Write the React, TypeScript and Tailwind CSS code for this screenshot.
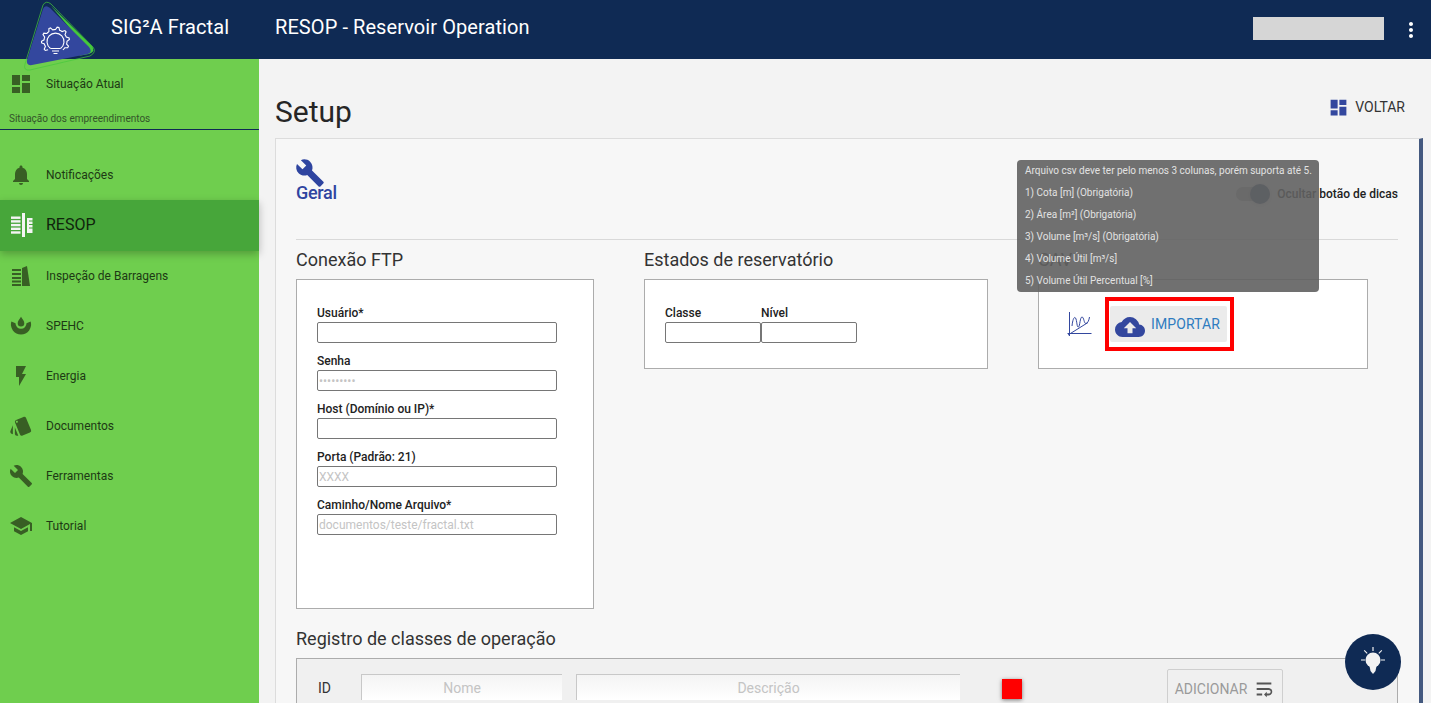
import { MdBuild, MdCloudUpload, MdDashboard, MdFlashOn, MdMoreVert, MdNotifications, MdSchool, MdStyle, MdWrapText } from "react-icons/md";
import type { ReactNode } from "react";

function ResopIcon({ className }: { className?: string }) {
    return (
        <svg viewBox="0 0 22 24" className={className} fill="currentColor">
            <rect x="11" y="0" width="3" height="24" />
            <rect x="0" y="3.500" width="9.500" height="2.400" />
            <rect x="0" y="7.200" width="9.500" height="2.400" />
            <rect x="0" y="10.900" width="9.500" height="2.400" />
            <rect x="0" y="14.600" width="9.500" height="2.400" />
            <rect x="0" y="18.300" width="9.500" height="2.400" />
            <path d="M16 5h5.500v2.500H18v1h3.500v2.500H18v1h3.500v2.500H18v1h3.500V20H16z" />
        </svg>
    );
}

function DamIcon({ className }: { className?: string }) {
    return (
        <svg viewBox="0 0 18 20" className={className} fill="currentColor">
            <path d="M10 2 L15 0 L18 20 H10z" />
            <rect x="0" y="3" width="9" height="2" />
            <rect x="0" y="7" width="9" height="2" />
            <rect x="0" y="11" width="9" height="2" />
            <rect x="0" y="14.500" width="9" height="2" />
            <rect x="0" y="18" width="9" height="2" />
        </svg>
    );
}

function DropIcon({ className }: { className?: string }) {
    return (
        <svg viewBox="0 0 24 24" className={className} fill="currentColor">
            <path d="M12 2c2 3 3.600 4.800 3.600 7a3.600 3.600 0 0 1-7.200 0C8.400 6.800 10 5 12 2z" />
            <path d="M1.500 7 L6 9 A6 6 0 0 0 18 9 L22.500 7 A11 11 0 1 1 1.500 7z" />
        </svg>
    );
}

function ChartIcon({ className }: { className?: string }) {
    return (
        <svg viewBox="0 0 26 26" className={className} fill="none" stroke="currentColor" strokeWidth="1">
            <path d="M3.500 1v24M1.500 22.500h24M2 24 L22 11.500" />
            <path d="M6 15 C7 6 9 5 10 8 S11 17 12.500 16 S14 6 16 6 S18 13 20 12.500 S23 9 23.500 6" />
        </svg>
    );
}

// gear teeth around the bulb, left open at the bottom
const GEAR_POINTS = Array.from({ length: 41 }, (_, i) => {
    const angle = ((130 + (i * 280) / 40) * Math.PI) / 180;
    const r = i % 5 === 1 || i % 5 === 2 ? 14 : 11.500;
    return `${(55.500 + r * Math.cos(angle)).toFixed(1)},${(41 + r * Math.sin(angle)).toFixed(1)}`;
}).join(" ");

function LogoMark() {
    return (
        <svg viewBox="0 0 100 76" className="absolute left-0 top-0 z-20 h-[76px] w-[100px]">
            <path d="M43 5 Q46 0 51 4 L93 47 Q97 52 90 56 L30 70 Q23 71 25 64z" fill="none" stroke="#45c93b" strokeWidth="0.7" />
            <path d="M51 6 L92 46 Q96 51 89 54 L78 56 Q90 52 85 46z" fill="#45c93b" />
            <path d="M43 9 Q45 4 50 8 L89 47 Q93 52 88 54 L32 65 Q26 66 27 60z" fill="#33479e" />
            <g fill="none" stroke="#fff" strokeWidth="1.100">
                <polyline points={GEAR_POINTS} />
                <path d="M50.500 48.500 A8.500 8.500 0 1 1 60.500 48.500" />
                <path d="M50.500 48.500h10M52 51h7M53.500 53.500h4" />
            </g>
        </svg>
    );
}

function SideItem({ icon, label, active }: { icon: ReactNode; label: string; active?: boolean }) {
    return (
        <div className={active
            ? "relative z-10 flex h-[51px] items-center bg-[#47a63a] pb-[1px] shadow-[0_3px_8px_rgba(0,0,0,0.25)]"
            : "flex h-[50px] items-center"}>
            <span className={active
                ? "flex w-[46px] shrink-0 justify-center pr-[3px] text-[#f4f4f4]"
                : "flex w-[46px] shrink-0 justify-center pr-[4px] text-[#385f24]"}>{icon}</span>
            <span className={active
                ? "text-base text-[#10240c]"
                : "text-xs text-[#1d3a14]"}>{label}</span>
        </div>
    );
}

function Sidebar() {
    return (
        <aside className="w-[259px] shrink-0 bg-[#6fce4e]">
            <SideItem icon={<MdDashboard size={24} />} label="Situação Atual" />
            <div className="box-content flex h-[19px] items-center border-b border-[#0f2a54] pb-[1px] pl-[9px] text-[10px] text-[#33552a]">Situação dos empreendimentos</div>
            <div className="h-[20px]" />
            <SideItem icon={<MdNotifications size={24} />} label="Notificações" />
            <SideItem active icon={<ResopIcon className="h-[24px] w-[22px]" />} label="RESOP" />
            <SideItem icon={<DamIcon className="h-[20px] w-[18px]" />} label="Inspeção de Barragens" />
            <SideItem icon={<DropIcon className="h-[22px] w-[22px]" />} label="SPEHC" />
            <SideItem icon={<MdFlashOn size={24} />} label="Energia" />
            <SideItem icon={<MdStyle size={24} />} label="Documentos" />
            <SideItem icon={<MdBuild size={24} />} label="Ferramentas" />
            <SideItem icon={<MdSchool size={24} />} label="Tutorial" />
        </aside>
    );
}

function Field({ label, placeholder }: { label: string; placeholder?: string }) {
    return (
        <div className="mb-[5px] w-[240px]">
            <div className="h-[17px] text-xs font-medium leading-[17px] text-[#222]">{label}</div>
            <input
                readOnly
                placeholder={placeholder}
                className="block h-[21px] w-full rounded-[2px] border border-[#767676] bg-white px-[1px] text-xs placeholder:text-[#c4c4c4]"
            />
            <div className="h-[5px]" />
        </div>
    );
}

function Tooltip() {
    const lines = [
        "1) Cota [m] (Obrigatória)",
        "2) Área [m²] (Obrigatória)",
        "3) Volume [m³/s] (Obrigatória)",
        "4) Volume Útil [m³/s]",
        "5) Volume Útil Percentual [%]",
    ];
    return (
        <div className="absolute left-[741px] top-[21px] z-10 h-[132px] w-[302px] whitespace-nowrap rounded-[4px] bg-[#616161]/90 px-[8px] text-[10px] leading-[22px] text-[#e2e2e2]">
            <div>Arquivo csv deve ter pelo menos 3 colunas, porém suporta até 5.</div>
            {lines.map((line) => <div key={line}>{line}</div>)}
        </div>
    );
}

export default function App() {
    return (
        <div className="relative flex h-[703px] flex-col overflow-hidden bg-[#f3f3f3] font-['Roboto',sans-serif]">
            <LogoMark />
            <header className="flex h-[59px] shrink-0 items-center bg-[#0f2a54] text-white">
                <div className="w-[275px] shrink-0 pb-[6px] pl-[111px] text-xl tracking-[0.08px]">SIG²A Fractal</div>
                <div className="pb-[6px] text-xl tracking-[0.08px]">RESOP - Reservoir Operation</div>
                <div className="mb-[2px] ml-auto mr-[7px] h-[23px] w-[131px] bg-[#d6d6d6]" />
                <MdMoreVert size={24} className="mx-[8px]" />
            </header>

            <div className="flex min-h-0 flex-1">
                <Sidebar />
                <main className="relative min-w-0 flex-1 pl-[16px]">
                    <div className="flex h-[79px] items-end pb-[8px]">
                        <h1 className="text-[30px] leading-[36px] text-[#262626]">Setup</h1>
                        <div className="mb-[13px] ml-auto mr-[26px] flex h-[20px] items-center gap-[6px] text-sm text-[#333]">
                            <MdDashboard size={21} className="text-[#33479e]" />
                            VOLTAR
                        </div>
                    </div>

                    <section className="relative flex h-[600px] w-[1148px] flex-col border-y border-l border-r-[4px] border-[#dcdcdc] border-r-[#44597f] bg-[#f7f7f7] pl-[20px] pr-[21px]">
                        <Tooltip />
                        <div className="flex h-[101px] shrink-0 border-b border-[#d9d9d9]">
                            <div className="pt-[19px] text-[#2f45a0]">
                                <MdBuild size={30} className="-ml-[1px]" />
                                <div className="-mt-[5px] text-lg font-medium leading-[20px] tracking-[-0.3px]">Geral</div>
                            </div>
                            <div className="ml-auto flex h-[110px] items-center gap-[7px] self-start text-xs font-medium text-[#222]">
                                <div className="relative h-[14px] w-[34px] rounded-full bg-[#bdbdbd]">
                                    <div className="absolute -top-[3px] right-0 h-[20px] w-[20px] rounded-full bg-[#44597f] shadow" />
                                </div>
                                Ocultar botão de dicas
                            </div>
                        </div>

                        <div className="flex shrink-0 pt-[8px]">
                            <div className="mr-[50px] w-[298px]">
                                <h2 className="mb-[7px] h-[24px] text-lg leading-[24px] text-[#333]">Conexão FTP</h2>
                                <div className="h-[330px] border border-[#acacac] bg-white pl-[20px] pt-[25px]">
                                    <Field label="Usuário*" />
                                    <Field label="Senha" placeholder="•••••••••" />
                                    <Field label="Host (Domínio ou IP)*" />
                                    <Field label="Porta (Padrão: 21)" placeholder="XXXX" />
                                    <Field label="Caminho/Nome Arquivo*" placeholder="documentos/teste/fractal.txt" />
                                </div>
                            </div>
                            <div className="mr-[50px] w-[344px]">
                                <h2 className="mb-[7px] h-[24px] text-lg leading-[24px] text-[#333]">Estados de reservatório</h2>
                                <div className="flex h-[90px] border border-[#acacac] bg-white pl-[20px] pt-[25px]">
                                    <div className="w-[96px]">
                                        <div className="h-[17px] text-xs font-medium leading-[17px] text-[#222]">Classe</div>
                                        <div className="h-[21px] rounded-[2px] border border-[#767676]" />
                                    </div>
                                    <div className="w-[96px]">
                                        <div className="h-[17px] text-xs font-medium leading-[17px] text-[#222]">Nível</div>
                                        <div className="h-[21px] rounded-[2px] border border-[#767676]" />
                                    </div>
                                </div>
                            </div>
                            <div className="w-[330px]">
                                <h2 className="mb-[7px] h-[24px] text-lg leading-[24px] text-[#333]">CAV</h2>
                                <div className="flex h-[90px] items-center border border-[#acacac] bg-white pl-[27px]">
                                    <ChartIcon className="h-[26px] w-[26px] text-[#33479e]" />
                                    <div className="ml-[13px] border-[4px] border-[#ff0000] py-[5px] pl-[1px] pr-[3px]">
                                        <div className="flex h-[36px] w-[117px] items-center gap-[6px] rounded-[2px] bg-[#ebebeb] pl-[5px] text-sm tracking-[0.1px] text-[#2f7cc0]">
                                            <MdCloudUpload size={30} className="mt-[6px] text-[#33479e]" />
                                            IMPORTAR
                                        </div>
                                    </div>
                                </div>
                            </div>
                        </div>

                        <h2 className="mt-[18px] h-[24px] shrink-0 text-lg leading-[24px] text-[#333]">Registro de classes de operação</h2>
                        <div className="mt-[7px] flex h-[80px] shrink-0 items-start border border-[#acacac] bg-[#f0f0f0] pl-[21px]">
                            <span className="mt-[19px] w-[43px] text-sm leading-[20px] text-[#333]">ID</span>
                            <div className="mt-[15px] flex h-[26px] w-[201px] items-center justify-center border-l border-t border-[#c8c8c8] bg-gradient-to-b from-[#f4f4f4] to-white text-sm text-[#c4c4c4]">Nome</div>
                            <div className="ml-[14px] mt-[15px] flex h-[26px] w-[384px] items-center justify-center border-l border-t border-[#c8c8c8] bg-gradient-to-b from-[#f4f4f4] to-white text-sm text-[#c4c4c4]">Descrição</div>
                            <div className="ml-[42px] mt-[20px] h-[20px] w-[20px] bg-[#ff0000] shadow-[0_1px_4px_rgba(0,0,0,0.5)]" />
                            <div className="ml-[145px] mt-[10px] flex h-[40px] w-[116px] items-center justify-center gap-[6px] rounded-[2px] border border-[#cfcfcf] text-sm text-[#9a9a9a]">
                                ADICIONAR
                                <MdWrapText size={22} className="text-[#555]" />
                            </div>
                        </div>
                    </section>

                    <div className="absolute bottom-[13px] right-[30px] z-20 flex h-[56px] w-[56px] items-center justify-center rounded-full bg-[#0f2a54]">
                        <svg viewBox="0 0 32 32" className="h-[32px] w-[32px]" fill="#f2f2f2">
                            <circle cx="16" cy="14" r="7.500" />
                            <path d="M12.500 20h7l-1 5-2.500 3-2.500-3z" />
                            <path d="M15.400 1h1.200v4h-1.200zM4 13.400h4v1.200H4zM24 13.400h4v1.200h-4zM6.800 4.800l.8-.8 3 3-.8.800zM25.200 4.800l-.8-.8-3 3 .8.800z" />
                        </svg>
                    </div>
                </main>
            </div>
        </div>
    );
}
